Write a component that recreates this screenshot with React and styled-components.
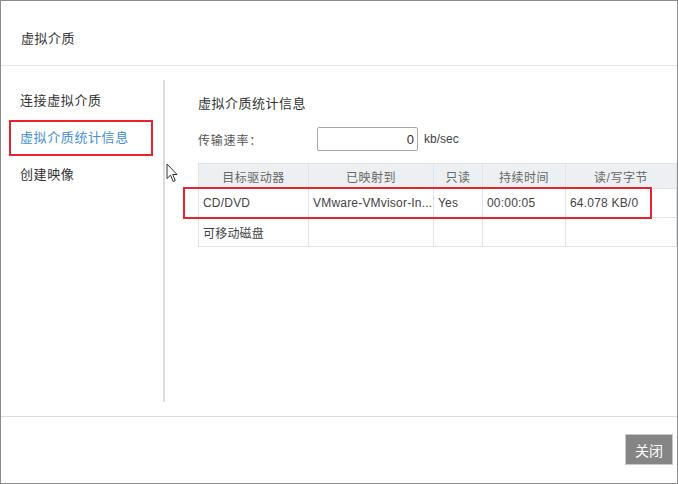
import React from "react";
import styled, { createGlobalStyle } from "styled-components";

const GlobalStyle = createGlobalStyle`
  html, body {
    margin: 0;
    padding: 0;
    background: #fff;
  }
  body {
    font-family: "Liberation Sans", "Noto Sans CJK SC", sans-serif;
    color: #333;
  }
  * {
    box-sizing: border-box;
  }
`;

const navItems = ["连接虚拟介质", "虚拟介质统计信息", "创建映像"];

const columns = [
  { title: "目标驱动器", width: 110 },
  { title: "已映射到", width: 125 },
  { title: "只读", width: 49 },
  { title: "持续时间", width: 83 },
  { title: "读/写字节", width: 111 },
];

const rows = [
  ["CD/DVD", "VMware-VMvisor-In...", "Yes", "00:00:05", "64.078 KB/0"],
  ["可移动磁盘", "", "", "", ""],
];

const App = () => {
  return (
    <>
      <GlobalStyle />
      <Dialog>
        <Header>
          <Title>虚拟介质</Title>
        </Header>
        <Body>
          <Nav>
            {navItems.map((item, i) => (
              <NavItem key={item} $active={i === 1}>
                {item}
                {i === 1 && <Highlight $nav />}
              </NavItem>
            ))}
          </Nav>
          <Content>
            <SectionTitle>虚拟介质统计信息</SectionTitle>
            <RateRow>
              <RateLabel>传输速率：</RateLabel>
              <RateInput readOnly value="0" />
              <Unit>kb/sec</Unit>
            </RateRow>
            <TableWrap>
              <Table>
                <colgroup>
                  {columns.map((c) => (
                    <col key={c.title} style={{ width: c.width }} />
                  ))}
                </colgroup>
                <thead>
                  <tr>
                    {columns.map((c) => (
                      <Th key={c.title}>{c.title}</Th>
                    ))}
                  </tr>
                </thead>
                <tbody>
                  {rows.map((r, i) => (
                    <tr key={i}>
                      {r.map((cell, j) => (
                        <Td key={j}>{cell}</Td>
                      ))}
                    </tr>
                  ))}
                </tbody>
              </Table>
              <Highlight />
            </TableWrap>
          </Content>
          <Cursor viewBox="0 0 12 20" width="12" height="20">
            <path
              d="M1 1 L1 15.5 L4.5 12.2 L7.2 18.5 L9.3 17.6 L6.7 11.5 L11 11.5 Z"
              fill="#fff"
              stroke="#333"
              strokeWidth="1"
              strokeLinejoin="round"
            />
          </Cursor>
        </Body>
        <Footer>
          <CloseBtn>关闭</CloseBtn>
        </Footer>
      </Dialog>
    </>
  );
};

const Dialog = styled.div`
  width: 678px;
  height: 484px;
  border: 1px solid #8c8c8c;
  display: flex;
  flex-direction: column;
  background: #fff;
`;

const Header = styled.div`
  height: 65px;
  flex-shrink: 0;
  display: flex;
  align-items: center;
  padding: 8px 0 0 20px;
  border-bottom: 1px solid #e6e8eb;
`;

const Title = styled.div`
  font-size: 13px;
  color: #333;
  letter-spacing: 0.5px;
`;

const Body = styled.div`
  flex: 1;
  display: flex;
  position: relative;
`;

const Nav = styled.div`
  width: 164px;
  flex-shrink: 0;
  margin: 14px 0;
  padding-top: 2px;
  border-right: 2px solid #dcdcdc;
`;

const NavItem = styled.div`
  position: relative;
  height: 37px;
  line-height: 37px;
  padding-left: 19px;
  font-size: 13px;
  letter-spacing: 0.6px;
  color: ${(p) => (p.$active ? "#3f8fd8" : "#333")};
`;

const Highlight = styled.div`
  position: absolute;
  border: 2px solid #e8232d;
  pointer-events: none;
  ${(p) =>
    p.$nav
      ? `
    left: 8px;
    top: 1px;
    width: 144px;
    height: 36px;
  `
      : `
    left: -15px;
    top: 24px;
    width: 469px;
    height: 32px;
  `}
`;

const Content = styled.div`
  flex: 1;
  padding: 29px 0 0 33px;
`;

const SectionTitle = styled.div`
  font-size: 13px;
  line-height: 18px;
  color: #333;
  letter-spacing: 0.5px;
`;

const RateRow = styled.div`
  display: flex;
  align-items: center;
  margin-top: 14px;
`;

const RateLabel = styled.div`
  width: 119px;
  font-size: 12px;
  color: #555;
  letter-spacing: 0.8px;
`;

const RateInput = styled.input`
  width: 101px;
  height: 24px;
  border: 1px solid #a8a8a8;
  border-radius: 2px;
  text-align: right;
  padding: 0 3px;
  font-family: "Liberation Sans", sans-serif;
  font-size: 13px;
  color: #333;
  outline: none;
`;

const Unit = styled.span`
  margin-left: 6px;
  font-size: 12px;
  color: #444;
`;

const TableWrap = styled.div`
  position: relative;
  margin-top: 12px;
  width: 478px;
`;

const Table = styled.table`
  width: 478px;
  border-collapse: collapse;
  table-layout: fixed;
  font-size: 12px;
`;

const Th = styled.th`
  height: 25px;
  padding: 0 4px;
  background: #edf0f3;
  border: 1px solid #e0e3e7;
  font-weight: normal;
  color: #666;
  text-align: center;
  letter-spacing: 0.5px;
`;

const Td = styled.td`
  height: 29px;
  padding: 0 4px;
  border: 1px solid #e0e3e7;
  color: #444;
  white-space: nowrap;
  overflow: hidden;
  letter-spacing: 0.2px;
`;

const Cursor = styled.svg`
  position: absolute;
  left: 165px;
  top: 97px;
`;

const Footer = styled.div`
  height: 67px;
  flex-shrink: 0;
  border-top: 1px solid #dcdcdc;
  display: flex;
  justify-content: flex-end;
  align-items: flex-start;
  padding: 17px 4px 0 0;
`;

const CloseBtn = styled.button`
  width: 48px;
  height: 31px;
  background: #858585;
  border: 1px solid #c9c9c9;
  color: #fff;
  font-family: "Noto Sans CJK SC", sans-serif;
  font-size: 14px;
  padding: 0;
  cursor: pointer;
`;

export default App;
